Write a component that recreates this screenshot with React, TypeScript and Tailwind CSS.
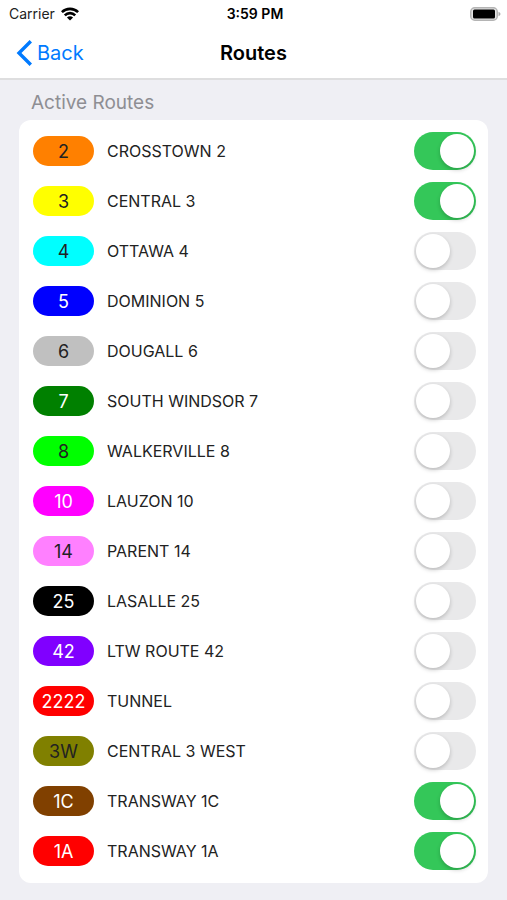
import { useState } from "react";

const routes = [
  { id: "2", name: "CROSSTOWN 2", color: "bg-[#ff8000] text-[#222222]", active: true },
  { id: "3", name: "CENTRAL 3", color: "bg-[#ffff00] text-[#222222]", active: true },
  { id: "4", name: "OTTAWA 4", color: "bg-[#00ffff] text-[#222222]", active: false },
  { id: "5", name: "DOMINION 5", color: "bg-[#0000ff] text-white", active: false },
  { id: "6", name: "DOUGALL 6", color: "bg-[#c0c0c0] text-[#222222]", active: false },
  { id: "7", name: "SOUTH WINDSOR 7", color: "bg-[#008000] text-white", active: false },
  { id: "8", name: "WALKERVILLE 8", color: "bg-[#00ff00] text-[#222222]", active: false },
  { id: "10", name: "LAUZON 10", color: "bg-[#ff00ff] text-white", active: false },
  { id: "14", name: "PARENT 14", color: "bg-[#ff80ff] text-[#222222]", active: false },
  { id: "25", name: "LASALLE 25", color: "bg-black text-white", active: false },
  { id: "42", name: "LTW ROUTE 42", color: "bg-[#8000ff] text-white", active: false },
  { id: "2222", name: "TUNNEL", color: "bg-[#ff0000] text-white", active: false },
  { id: "3W", name: "CENTRAL 3 WEST", color: "bg-[#808000] text-[#222222]", active: false },
  { id: "1C", name: "TRANSWAY 1C", color: "bg-[#804000] text-white", active: true },
  { id: "1A", name: "TRANSWAY 1A", color: "bg-[#ff0000] text-white", active: true },
];

const StatusBar = () => {
  return (
    <div className="grid h-7 grid-cols-3 items-center pr-1.5 pl-[9px] text-sm text-[#222222]">
      <div className="flex items-center gap-1.5">
        <span>Carrier</span>
        <svg className="h-3.5 w-[18px]" viewBox="0 0 18 14" aria-label="Wi-Fi">
          <g fill="none" stroke="#000" strokeWidth="2.6">
            <path d="M0.9 5.2a11.5 11.5 0 0 1 16.2 0" />
            <path d="M3.8 8.3a7.4 7.4 0 0 1 10.4 0" />
          </g>
          <path d="M9 13.6 5.9 10.6a4.5 4.5 0 0 1 6.2 0Z" />
        </svg>
      </div>
      <span className="text-center font-semibold text-black">3:59 PM</span>
      <svg className="h-3.5 w-[31px] justify-self-end" viewBox="0 0 31 14" aria-label="Battery">
        <rect x="0.75" y="0.75" width="26.5" height="12.5" rx="4" fill="#e4e4e4" stroke="#b4b4b4" strokeWidth="1.5" />
        <rect x="3" y="2.5" width="22" height="9" rx="1.5" />
        <path d="M28.5 4.8q2 .7 2 2.2t-2 2.2Z" fill="#aaa" />
      </svg>
    </div>
  );
};

const NavBar = () => {
  return (
    <nav className="grid h-[50px] grid-cols-3 items-center px-4 text-xl">
      <button className="flex items-center gap-1 justify-self-start text-[#007aff]" type="button">
        <svg className="h-[26px] w-[17px]" viewBox="0 0 17 26" fill="none" stroke="currentColor" strokeWidth="3.4">
          <path d="M14.8 1.2 3 13l11.8 11.8" />
        </svg>
        Back
      </button>
      <h1 className="text-center font-semibold text-black">Routes</h1>
    </nav>
  );
};

const RouteRow = ({ route }: { route: (typeof routes)[number] }) => {
  const [active, setActive] = useState(route.active);

  return (
    <li>
      <label className="flex h-[50px] items-center">
        <span className={`flex h-[30px] w-[61px] items-center justify-center rounded-full pt-0.5 text-lg ${route.color}`}>
          {route.id}
        </span>
        <span className="ml-[13px] flex-1 text-base text-[#222222]">{route.name}</span>
        <input
          className="h-[38px] w-[62px] appearance-none rounded-full bg-[#e9e9ea] p-0.5 before:block before:size-[34px] before:rounded-full before:bg-white before:shadow-[0_2px_4px_rgba(0,0,0,0.2)] checked:bg-[#34c759] checked:before:ml-6"
          type="checkbox"
          role="switch"
          checked={active}
          onChange={() => setActive(!active)}
        />
      </label>
    </li>
  );
};

export default function App() {
  return (
    <div className="min-h-screen bg-[#efeff4] font-['Inter',sans-serif]">
      <header className="border-b-2 border-[#dededf] bg-white">
        <StatusBar />
        <NavBar />
      </header>
      <main className="px-[19px] pt-2.5 pb-4">
        <h2 className="mb-1 px-3 text-[19px] leading-[26px] text-[#8e8e93]">Active Routes</h2>
        <ul className="rounded-xl bg-white pt-1.5 pr-3 pb-[7px] pl-3.5">
          {routes.map((route) => (
            <RouteRow key={route.id} route={route} />
          ))}
        </ul>
      </main>
    </div>
  );
}
